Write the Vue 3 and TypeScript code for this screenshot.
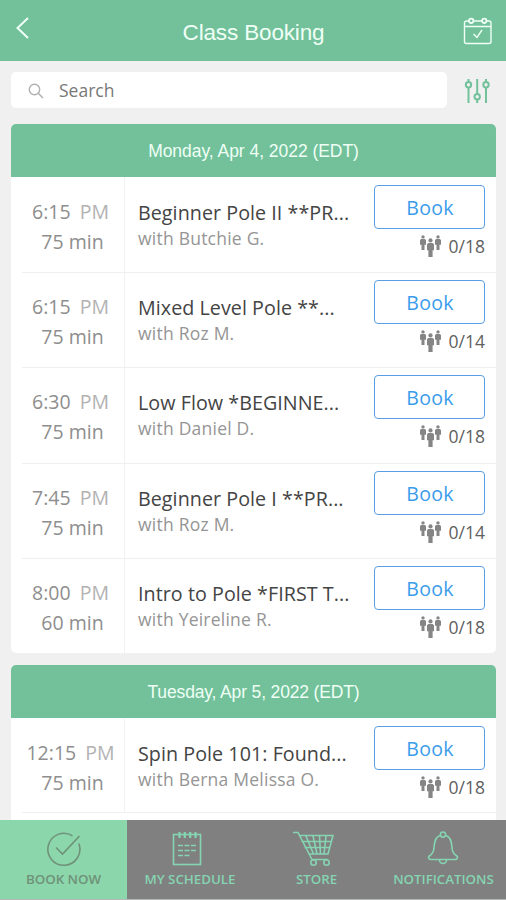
<script setup lang="ts">
interface ClassItem {
  time: string
  duration: string
  title: string
  teacher: string
  spots: string
}

interface Day {
  label: string
  classes: ClassItem[]
}

const days: Day[] = [
  {
    label: 'Monday, Apr 4, 2022 (EDT)',
    classes: [
      { time: '6:15', duration: '75 min', title: 'Beginner Pole II **PR...', teacher: 'with Butchie G.', spots: '0/18' },
      { time: '6:15', duration: '75 min', title: 'Mixed Level Pole **...', teacher: 'with Roz M.', spots: '0/14' },
      { time: '6:30', duration: '75 min', title: 'Low Flow *BEGINNE...', teacher: 'with Daniel D.', spots: '0/18' },
      { time: '7:45', duration: '75 min', title: 'Beginner Pole I **PR...', teacher: 'with Roz M.', spots: '0/14' },
      { time: '8:00', duration: '60 min', title: 'Intro to Pole *FIRST T...', teacher: 'with Yeireline R.', spots: '0/18' },
    ],
  },
  {
    label: 'Tuesday, Apr 5, 2022 (EDT)',
    classes: [
      { time: '12:15', duration: '75 min', title: 'Spin Pole 101: Found...', teacher: 'with Berna Melissa O.', spots: '0/18' },
    ],
  },
]
</script>

<template>
  <div class="screen">
    <header class="topbar">
      <svg class="back" width="14" height="22" viewBox="0 0 14 22"><path d="M12 1 1.500 11 12 21" /></svg>
      <h1>Class Booking</h1>
      <svg class="calendar" width="30" height="30" viewBox="0 0 30 30">
        <path d="M6 4H3.500a2 2 0 0 0-2 2v18.500a2 2 0 0 0 2 2H26a2 2 0 0 0 2-2V6a2 2 0 0 0-2-2h-2.500M10.500 4h8.500M1.500 9.500H28M10.500 17l3.500 3.500 5-7.500" />
        <circle class="ring" cx="8.200" cy="3.800" r="2.200" /><circle class="ring" cx="21.300" cy="3.800" r="2.200" />
      </svg>
    </header>

    <div class="tools">
      <div class="search">
        <svg width="16" height="16" viewBox="0 0 16 16"><circle cx="6.500" cy="6.500" r="5.200" /><path d="m10.500 10.500 4.500 4.500" /></svg>
        <span>Search</span>
      </div>
      <svg class="filter" width="26" height="26" viewBox="0 0 26 26">
        <path d="M4.500 1v3M4.500 9.500V25M13.200 1v15.200M13.200 21.500V25M22 1v3M22 9.500V25" />
        <circle cx="4.500" cy="6.800" r="2.700" /><circle cx="13.200" cy="18.800" r="2.700" /><circle cx="22" cy="6.800" r="2.700" />
      </svg>
    </div>

    <main class="days">
      <section v-for="day in days" :key="day.label" class="card">
        <h2>{{ day.label }}</h2>
        <article v-for="(item, i) in day.classes" :key="i" class="row">
          <div class="when">
            <p>{{ item.time }} <span class="pm">PM</span></p>
            <p class="length">{{ item.duration }}</p>
          </div>
          <div class="info">
            <h3>{{ item.title }}</h3>
            <p>{{ item.teacher }}</p>
          </div>
          <div class="action">
            <button type="button">Book</button>
            <div class="spots">
              <svg width="23" height="22" viewBox="0 0 23 22">
                <circle cx="4" cy="1.900" r="1.700" /><path d="M2 4h4l1 1.200v4.600H5.500v5.200h-3V9.800H1V5.200z" />
                <circle cx="19" cy="1.900" r="1.700" /><path d="M17 4h4l1 1.200v4.600h-1.500v5.200h-3V9.800H16V5.200z" />
                <circle cx="11.500" cy="5.400" r="2.100" /><path d="M9.300 8h4.400l1.300 1.300v6h-1.400V22H9.400v-6.700H8v-6z" />
              </svg>
              <span>{{ item.spots }}</span>
            </div>
          </div>
        </article>
        <div class="row"></div>
      </section>
    </main>

    <nav class="tabs">
      <a class="tab book active">
        <svg width="38" height="36" viewBox="0 0 38 36"><path d="M27.500 4.800A16 16 0 1 0 33.800 12.500M11 16.500l6.500 6.500L34.500 5" /></svg>
        <span>BOOK NOW</span>
      </a>
      <a class="tab schedule">
        <svg width="30" height="36" viewBox="0 0 30 36">
          <rect x="1.500" y="3.500" width="27" height="30" />
          <path class="pins" d="M7.500 1v6M12.800 1v6M18.200 1v6M23.500 1v6" />
          <path class="dash" d="M6 14.500h18M6 19.500h18M6 24.500h12" />
        </svg>
        <span>MY SCHEDULE</span>
      </a>
      <a class="tab store">
        <svg width="42" height="36" viewBox="0 0 42 36">
          <path d="M1 1.500h5l14 27M7.500 4.500H41L36 23H17M9.500 10.500h30M12.500 16.500h25M14 5l7.500 18M21 5l4 18M27.500 5l1 18M34 5l-2 18M20 28.500h16" />
          <circle cx="21.500" cy="31.500" r="2.700" /><circle cx="34.500" cy="31.500" r="2.700" />
        </svg>
        <span>STORE</span>
      </a>
      <a class="tab notifications">
        <svg width="32" height="36" viewBox="0 0 32 36">
          <path d="M13 4.500C8.500 6 7.500 10 7.200 15 7 21 5 23 1.800 25.500c-.8 1.500.5 3 2 3h24.500c1.500 0 2.800-1.500 2-3-3.300-2.500-5.300-4.500-5.500-10.500-.3-5-1.300-9-5.800-10.500" />
          <circle cx="16" cy="3.600" r="2.600" /><path d="M12.500 29a3.500 3.500 0 1 0 7 0" />
        </svg>
        <span>NOTIFICATIONS</span>
      </a>
    </nav>
  </div>
</template>

<style>
body {
  margin: 0;
  background: #f0f0f0;
}
</style>

<style scoped>
.screen {
  height: 900px;
  width: 506px;
  display: flex;
  flex-direction: column;
  overflow: hidden;
  background: #f0f0f0;
  font-family: "Open Sans", "Noto Sans", sans-serif;
  font-weight: 400;
}
h1, h2, h3, p { margin: 0; font-weight: inherit; white-space: nowrap; }
svg { fill: none; stroke: currentColor; flex: none; display: block; }
.topbar {
  height: 61px;
  flex: none;
  box-sizing: border-box;
  padding: 3px 13px 0 16px;
  display: grid;
  grid-template-columns: 30px 1fr 30px;
  align-items: center;
  background: #72c19b;
  color: #effff5;
}
.topbar h1 {
  font: 400 22.500px/30px "Liberation Sans", sans-serif;
  letter-spacing: -.15px;
  text-align: center;
  padding: 2px 2px 0 0;
}
.back { stroke-width: 2; margin-bottom: 9px; }
.calendar { stroke-width: 1.400; }
.ring { stroke-width: 1.800; }
.tools {
  height: 63px;
  flex: none;
  box-sizing: border-box;
  padding: 11px 16px 0 11px;
  display: flex;
  justify-content: space-between;
  align-items: flex-start;
}
.search {
  width: 436px;
  height: 36px;
  box-sizing: border-box;
  padding-left: 17px;
  display: flex;
  align-items: center;
  gap: 15px;
  border-radius: 5px;
  background: #fff;
  color: #787878;
  font-size: 17.500px;
}
.search svg { stroke: #b0b0b0; stroke-width: 1.400; margin-top: 1px; }
.filter { color: #72c19b; stroke-width: 2; margin: 6px 0 0; }
.days {
  flex: 1;
  min-height: 0;
  overflow: hidden;
  padding: 0 10px 0 11px;
}
.card { background: #fff; border-radius: 5px; overflow: hidden; margin-bottom: 12px; }
.card:first-child .row:last-child { display: none; }
.card h2 {
  height: 53px;
  background: #72c19b;
  color: #effff5;
  text-align: center;
  font: 400 17.500px/55px "Liberation Sans", sans-serif;
  letter-spacing: -.04px;
}
.card:last-child h2 { letter-spacing: -.15px; }
.row { height: 95.200px; display: flex; position: relative; }
.card:last-child .row { height: 94px; }
.row + .row::before {
  content: "";
  position: absolute;
  left: 11px;
  right: 0;
  top: 0;
  height: 1px;
  background: #eeefef;
}
.when {
  width: 114px;
  flex: none;
  box-sizing: border-box;
  border-right: 1px solid #f1f3f3;
  padding: 20px 0 0 7px;
  text-align: center;
  color: #8e8e8e;
  font-size: 19.500px;
  line-height: 30px;
}
.when p { margin-left: -1px; }
.when .length { margin-left: 3px; }
.pm { margin-left: 4px; color: #b2b2b2; }
.info { flex: 1; min-width: 0; padding: 22px 0 0 13px; }
.info h3 { color: #444; font-size: 19.700px; line-height: 28px; letter-spacing: .05px; }
.info p { color: #959595; font-size: 17.500px; line-height: 23px; letter-spacing: .23px; }
.action { width: 111px; flex: none; margin-right: 11px; padding-top: 8px; }
button {
  display: block;
  width: 111px;
  height: 44px;
  padding: 2px 0 0 1px;
  border: 1.500px solid #5a9fe3;
  border-radius: 4px;
  background: #fff;
  color: #3a9ceb;
  font: 400 19.500px/40px "Open Sans", sans-serif;
  letter-spacing: .3px;
}
.spots {
  display: flex;
  justify-content: flex-end;
  align-items: center;
  gap: 7px;
  padding-top: 5px;
  color: #606060;
  font-size: 17.500px;
  line-height: 24px;
}
.spots svg { fill: #858585; stroke: none; }
.tabs {
  height: 80px;
  flex: none;
  box-sizing: border-box;
  display: grid;
  grid-template-columns: 127px 126px 127px 126px;
  border-bottom: 1px solid #b4b8b6;
  background: #808080;
  color: #85d4b2;
}
.tab {
  display: flex;
  flex-direction: column;
  align-items: center;
  padding-top: 11px;
  gap: 3px;
  font-size: 13.300px;
  font-weight: 600;
  line-height: 18px;
  white-space: nowrap;
}
.tab svg { stroke-width: 1.600; }
.tab .pins { stroke-width: 2.200; }
.active { background: #8bd6ab; color: #6f9279; }
.schedule svg { margin-right: 7px; }
.store svg { margin-right: 8px; }
.notifications span { padding-left: 1px; }
.dash { stroke-dasharray: 5 1.500; }
</style>
